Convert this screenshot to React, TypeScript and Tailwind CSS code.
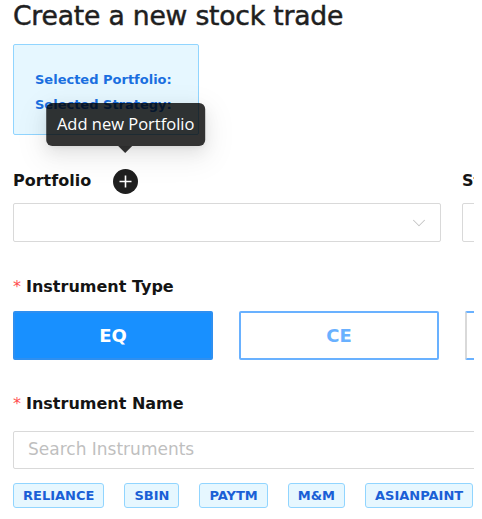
import { ChevronDown } from 'lucide-react'

const tags = ['RELIANCE', 'SBIN', 'PAYTM', 'M&M', 'ASIANPAINT']

export default function App() {
  return (
    <div className="w-[482px] h-[519px] bg-white">
      <div className="w-[474px] h-[519px] overflow-hidden font-['DejaVu_Sans',sans-serif]">
        <div className="w-[960px] px-[13px]">
          <h1 className="text-[26.6px] leading-[32px] text-[#1f1f1f] tracking-[-0.2px] [-webkit-text-stroke:0.5px_#1f1f1f]">
            Create a new stock trade
          </h1>

          {/* selection summary */}
          <div className="mt-[12px] w-[186px] h-[91px] rounded-[2px] border border-[#91d5ff] bg-[#e6f7ff] pl-[21px] pt-[22px]">
            <p className="text-[13px] leading-[25px] font-bold text-[#1a6fe0]">Selected Portfolio:</p>
            <p className="text-[13px] leading-[25px] font-bold text-[#1a6fe0]">Selected Strategy:</p>
          </div>

          <div className="mt-[34px] grid grid-cols-[428px_428px] gap-x-[21px]">
            <div>
              <div className="flex items-center h-[24px]">
                <span className="text-[16px] font-bold text-[#141414]">Portfolio</span>
                <div className="relative ml-[22px]">
                  <button className="w-[25px] h-[25px] rounded-full bg-[#1f1f1f] flex items-center justify-center">
                    <svg width="15" height="15" viewBox="0 0 15 15">
                      <path d="M7.5 1.5v12M1.5 7.5h12" stroke="white" strokeWidth="1.6" />
                    </svg>
                  </button>
                  {/* tooltip */}
                  <div className="absolute left-1/2 -translate-x-1/2 bottom-[41px] flex flex-col items-center">
                    <div className="whitespace-nowrap rounded-[6px] bg-black/80 px-[11px] h-[43px] flex items-center text-[16.5px] text-white font-['Open_Sans',sans-serif] shadow-[0_6px_16px_0_rgba(0,0,0,0.08),0_3px_6px_-4px_rgba(0,0,0,0.12),0_9px_28px_8px_rgba(0,0,0,0.05)]">
                      Add new Portfolio
                    </div>
                    <div className="w-0 h-0 border-x-[7px] border-x-transparent border-t-[7px] border-t-black/80" />
                  </div>
                </div>
              </div>
              <div className="mt-[10px] h-[39px] rounded-[2px] border border-[#d9d9d9] flex items-center justify-end pr-[10px]">
                <ChevronDown className="w-[22px] h-[22px] text-[#c4c4c4]" strokeWidth={1.1} />
              </div>
            </div>
            <div>
              <div className="flex items-center h-[24px]">
                <span className="text-[16px] font-bold text-[#141414]">Strategy</span>
              </div>
              <div className="mt-[10px] h-[39px] rounded-[2px] border border-[#d9d9d9]" />
            </div>
          </div>

          <div className="mt-[33px] flex items-center h-[24px]">
            <span className="text-[#ff4d4f] text-[16px] mr-[5px]">*</span>
            <span className="text-[16px] font-bold text-[#141414]">Instrument Type</span>
          </div>
          <div className="mt-[12px] grid grid-cols-[200px_200px_200px] gap-x-[26px]">
            <button className="h-[49px] bg-[#1890ff] border-2 border-[#2e8ff0] text-white text-[18px] font-bold rounded-[2px]">
              EQ
            </button>
            <button className="h-[49px] bg-white border-2 border-[#69b1ff] text-[#69b1ff] text-[18px] font-bold rounded-[2px]">
              CE
            </button>
            <button className="h-[49px] bg-white border-2 border-[#69b1ff] border-l-[#d9d9d9] text-[#69b1ff] text-[18px] font-bold rounded-[2px]">
              PE
            </button>
          </div>

          <div className="mt-[32px] flex items-center h-[24px]">
            <span className="text-[#ff4d4f] text-[16px] mr-[5px]">*</span>
            <span className="text-[16px] font-bold text-[#141414]">Instrument Name</span>
          </div>
          <div className="mt-[15px] w-[700px] h-[38px] rounded-[2px] border border-[#d9d9d9] flex items-center px-[14px]">
            <span className="text-[17px] text-[#bfbfbf]">Search Instruments</span>
          </div>
          <div className="mt-[14px] flex gap-x-[20px]">
            {tags.map(t => (
              <span
                key={t}
                className="h-[25px] px-[9px] flex items-center rounded-[3px] border border-[#91d5ff] bg-[#e6f7ff] text-[13px] font-bold text-[#1a5fd6]"
              >
                {t}
              </span>
            ))}
          </div>
        </div>
      </div>
    </div>
  )
}
